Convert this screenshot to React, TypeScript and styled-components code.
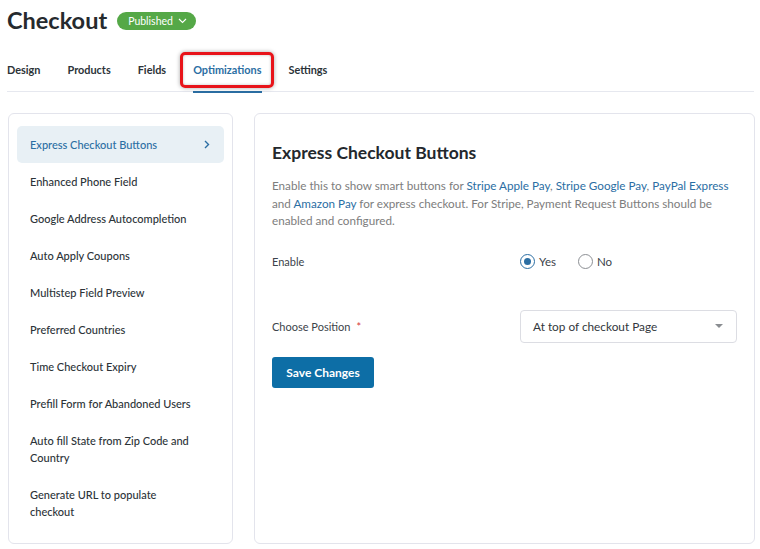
import React, { useState } from "react";
import styled, { createGlobalStyle } from "styled-components";

const Global = createGlobalStyle`
  html, body { margin: 0; padding: 0; background: #ffffff; }
  body { font-family: "Lato", "Noto Sans", sans-serif; color: #333; -webkit-font-smoothing: antialiased; }
  * { box-sizing: border-box; }
`;

const Page = styled.div`
  width: 760px;
  height: 549px;
  overflow: hidden;
  padding: 0 6px 0 7px;
`;

const Header = styled.div`
  display: flex;
  align-items: center;
  gap: 10px;
  height: 40px;
`;

const Title = styled.h1`
  margin: 0;
  font-size: 23.5px;
  font-weight: 700;
  color: #262a2e;
  line-height: 38px;
`;

const Badge = styled.button`
  display: inline-flex;
  align-items: center;
  gap: 5px;
  height: 18px;
  padding: 0 9px 0 11px;
  border: none;
  border-radius: 9px;
  background: #55a847;
  color: #fff;
  font-family: inherit;
  font-size: 10.5px;
  margin-top: 1px;
`;

const Tabs = styled.nav`
  display: flex;
  gap: 27px;
  height: 52px;
  align-items: stretch;
  border-bottom: 1.5px solid #e6e8ef;
`;

const Tab = styled.div<{ $active?: boolean }>`
  position: relative;
  display: flex;
  align-items: center;
  padding-top: 9px;
  font-size: 10.9px;
  font-weight: 700;
  color: ${(p) => (p.$active ? "#2b6ea3" : "#2c3338")};
  border-bottom: 2px solid ${(p) => (p.$active ? "#2b6ea3" : "transparent")};
  margin-bottom: -1.5px;
`;

const Highlight = styled.span`
  position: absolute;
  left: -13px;
  right: -12px;
  top: 12px;
  height: 36px;
  border: 3px solid #e8141a;
  border-radius: 5px;
  box-shadow: 0 0 4px rgba(0, 0, 0, 0.35), inset 0 0 3px rgba(0, 0, 0, 0.25);
  pointer-events: none;
`;

const Main = styled.div`
  display: grid;
  grid-template-columns: 225px 501px;
  gap: 21px;
  margin-top: 21px;
  padding-left: 1px;
  height: 431px;
`;

const Panel = styled.div`
  background: #fff;
  border: 1px solid #e3e4ec;
  border-radius: 6px;
`;

const SideList = styled(Panel)`
  padding: 12px 8px;
  display: flex;
  flex-direction: column;
`;

const SideItem = styled.div<{ $active?: boolean }>`
  display: flex;
  align-items: center;
  justify-content: space-between;
  padding: 10px 14px 10px 13px;
  line-height: 17px;
  font-size: 11px;
  font-weight: 500;
  border-radius: 5px;
  color: ${(p) => (p.$active ? "#2b6ea3" : "#2c3338")};
  background: ${(p) => (p.$active ? "#e8f0f5" : "transparent")};
`;

const ItemText = styled.span<{ $max?: number }>`
  max-width: ${(p) => (p.$max ? `${p.$max}px` : "none")};
`;

const Content = styled(Panel)`
  padding: 27px 17px 0 17px;
`;

const Heading = styled.h2`
  margin: 0 0 13px;
  font-size: 17.5px;
  font-weight: 700;
  color: #23282d;
  line-height: 23px;
`;

const Desc = styled.p`
  margin: 0 0 19px;
  font-size: 11.7px;
  line-height: 17.5px;
  color: #7d7d7d;
`;

const Link = styled.a`
  color: #2b6ea3;
  text-decoration: none;
`;

const Row = styled.div<{ $h: number; $mt?: number }>`
  display: grid;
  grid-template-columns: 248px 1fr;
  align-items: center;
  height: ${(p) => p.$h}px;
  margin-top: ${(p) => p.$mt ?? 0}px;
`;

const Label = styled.div`
  font-size: 11px;
  color: #3c434a;
`;

const Req = styled.span`
  color: #d63638;
  margin-left: 6px;
`;

const Radios = styled.div`
  display: flex;
  gap: 22px;
  align-items: center;
`;

const RadioLabel = styled.label`
  display: inline-flex;
  align-items: center;
  gap: 4px;
  font-size: 11.5px;
  color: #3c434a;
  cursor: pointer;
`;

const RadioCircle = styled.span<{ $on?: boolean }>`
  width: 15px;
  height: 15px;
  border-radius: 50%;
  border: 1px solid ${(p) => (p.$on ? "#2b6ea3" : "#8c8f94")};
  display: inline-flex;
  align-items: center;
  justify-content: center;
  &::after {
    content: "";
    width: 7px;
    height: 7px;
    border-radius: 50%;
    background: ${(p) => (p.$on ? "#2b6ea3" : "transparent")};
  }
`;

const Select = styled.div`
  display: flex;
  align-items: center;
  justify-content: space-between;
  height: 33px;
  padding: 0 13px 0 12px;
  border: 1px solid #dcdde3;
  border-radius: 4px;
  font-size: 11.8px;
  color: #32373c;
`;

const Caret = styled.span`
  width: 0;
  height: 0;
  border-left: 4px solid transparent;
  border-right: 4px solid transparent;
  border-top: 4px solid #8a8d91;
`;

const SaveButton = styled.button`
  margin-top: 14px;
  width: 102px;
  height: 31px;
  border: none;
  border-radius: 3px;
  background: #0d6ea6;
  color: #fff;
  font-family: inherit;
  font-size: 12px;
  font-weight: 700;
`;

const tabs = ["Design", "Products", "Fields", "Optimizations", "Settings"];
const items: { label: string; max?: number }[] = [
  { label: "Express Checkout Buttons" },
  { label: "Enhanced Phone Field" },
  { label: "Google Address Autocompletion" },
  { label: "Auto Apply Coupons" },
  { label: "Multistep Field Preview" },
  { label: "Preferred Countries" },
  { label: "Time Checkout Expiry" },
  { label: "Prefill Form for Abandoned Users" },
  { label: "Auto fill State from Zip Code and Country", max: 170 },
  { label: "Generate URL to populate checkout", max: 140 },
];

export default function App() {
  const [enabled, setEnabled] = useState(true);
  return (
    <Page>
      <Global />
      <Header>
        <Title>Checkout</Title>
        <Badge>
          Published
          <svg width="9" height="6" viewBox="0 0 9 6" fill="none">
            <path d="M1 1l3.5 3.5L8 1" stroke="#fff" strokeWidth="1.1" />
          </svg>
        </Badge>
      </Header>
      <Tabs>
        {tabs.map((t) => (
          <Tab key={t} $active={t === "Optimizations"}>
            {t}
            {t === "Optimizations" && <Highlight />}
          </Tab>
        ))}
      </Tabs>
      <Main>
        <SideList>
          {items.map((it, i) => (
            <SideItem key={it.label} $active={i === 0}>
              <ItemText $max={it.max}>{it.label}</ItemText>
              {i === 0 && (
                <svg width="6" height="9" viewBox="0 0 6 9" fill="none">
                  <path d="M1 1l3.5 3.5L1 8" stroke="#2b6ea3" strokeWidth="1.4" />
                </svg>
              )}
            </SideItem>
          ))}
        </SideList>
        <Content>
          <Heading>Express Checkout Buttons</Heading>
          <Desc>
            Enable this to show smart buttons for <Link>Stripe Apple Pay</Link>, <Link>Stripe Google Pay</Link>,{" "}
            <Link>PayPal Express</Link> and <Link>Amazon Pay</Link> for express checkout. For Stripe, Payment Request
            Buttons should be enabled and configured.
          </Desc>
          <Row $h={26}>
            <Label>Enable</Label>
            <Radios>
              <RadioLabel onClick={() => setEnabled(true)}>
                <RadioCircle $on={enabled} />
                Yes
              </RadioLabel>
              <RadioLabel onClick={() => setEnabled(false)}>
                <RadioCircle $on={!enabled} />
                No
              </RadioLabel>
            </Radios>
          </Row>
          <Row $h={33} $mt={35}>
            <Label>
              Choose Position<Req>*</Req>
            </Label>
            <Select>
              At top of checkout Page
              <Caret />
            </Select>
          </Row>
          <SaveButton>Save Changes</SaveButton>
        </Content>
      </Main>
    </Page>
  );
}
